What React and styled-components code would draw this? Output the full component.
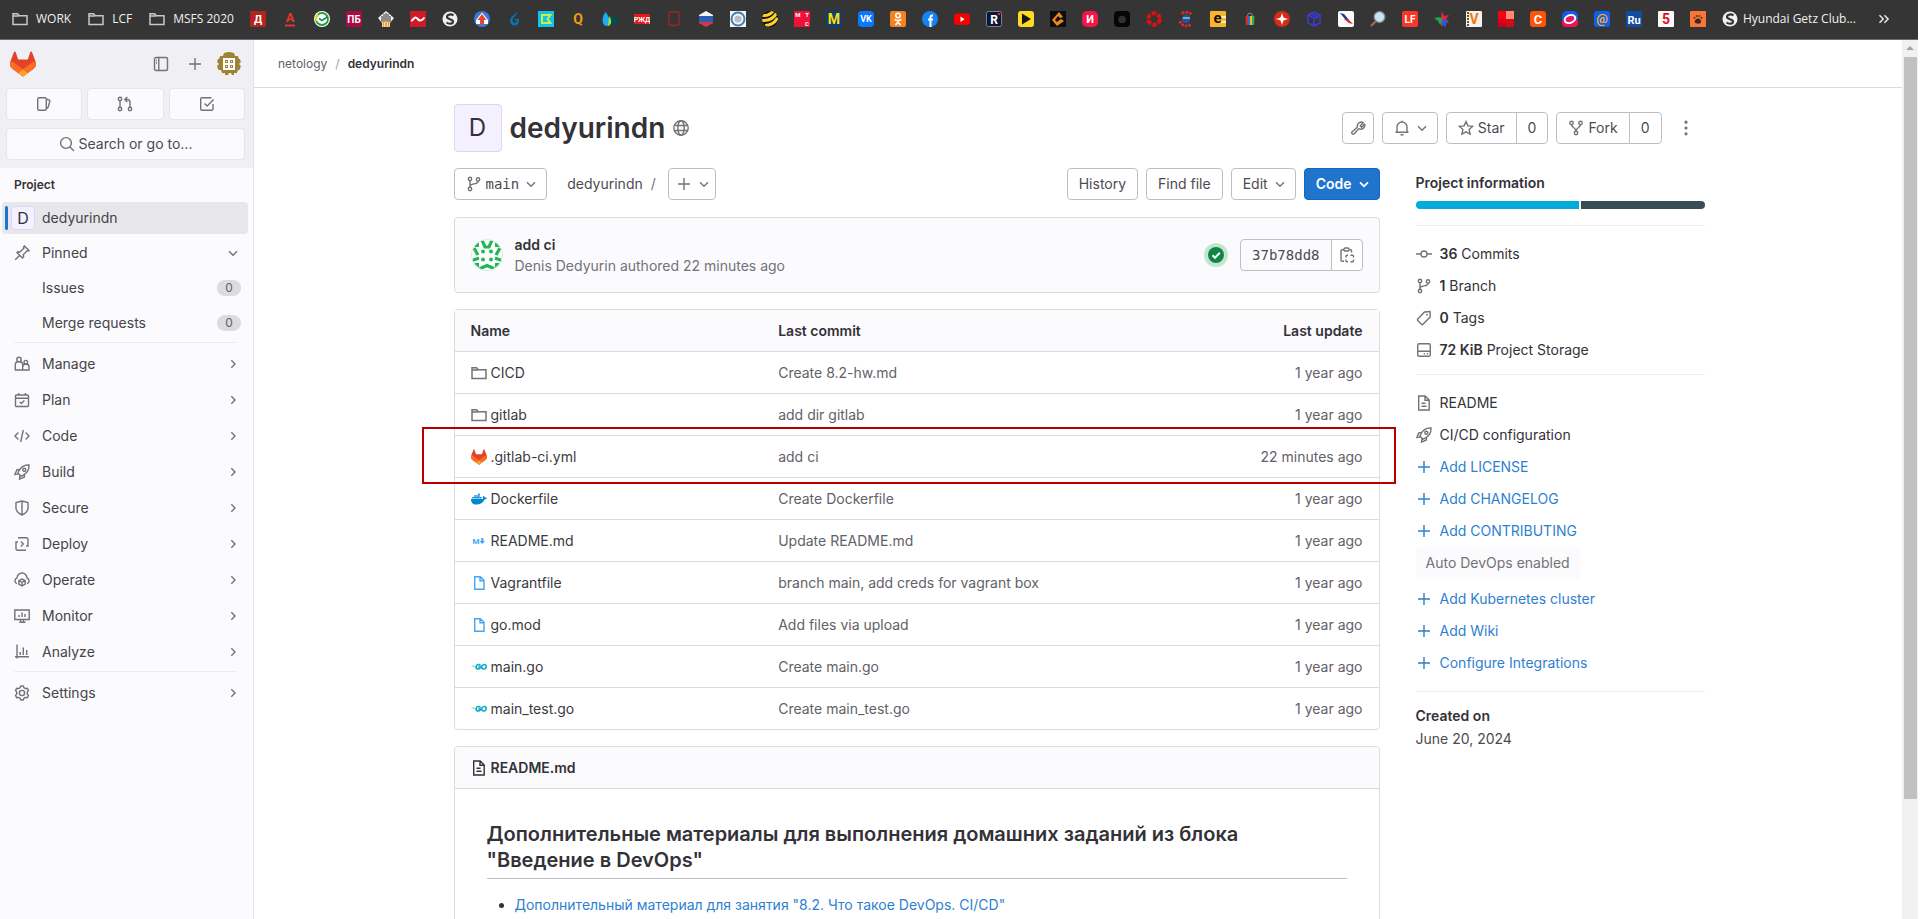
import React from "react";
import styled, { createGlobalStyle, css } from "styled-components";
import { FaDocker, FaGolang } from "react-icons/fa6";

const sans = `Inter, "Noto Sans", "Liberation Sans", sans-serif`;
const mono = `"DejaVu Sans Mono", "Liberation Mono", monospace`;

const c = {
  text: "#333238",
  soft: "#626168",
  muted: "#737278",
  border: "#dcdcde",
  line: "#ececef",
  control: "#bfbfc3",
  subtle: "#fbfafd",
  link: "#2f7fd0",
};

const GlobalStyle = createGlobalStyle`
  *, *::before, *::after { box-sizing: border-box; }
  body { margin: 0; font-family: ${sans}; font-size: 14px; line-height: 20px; color: ${c.text}; background: #fff; }
  button { font: inherit; color: inherit; cursor: pointer; margin: 0; }
  a { color: inherit; text-decoration: none; }
  ul, h1, h2, h3, p { margin: 0; padding: 0; }
  ul { list-style: none; }
  svg { display: block; flex: none; }
`;

/* ---------- icons ---------- */

const glyphs = {
  folder: <path d="M1 12.8V2.8h4.6l1.6 2H15v8.8H1zM1 5h6" />,
  panel: <><rect x="1.5" y="1.5" width="13" height="13" rx="1.5" /><path d="M5.8 1.5v13M3 4.5h1M3 7h1" /></>,
  plus: <path d="M8 2v12M2 8h12" />,
  issues: <><rect x="1.7" y="1.7" width="8.6" height="12.6" rx="1.5" /><path d="M10.5 3.2l2.6.7a1 1 0 0 1 .7 1.2l-1.6 6-1.7 1.7" /></>,
  merge: <><circle cx="3" cy="3" r="1.7" /><circle cx="3" cy="13" r="1.7" /><circle cx="13" cy="13" r="1.7" /><path d="M3 4.7v6.6M13 11.3V6.5a3 3 0 0 0-3-3H8M10.3 1 7.8 3.5 10.3 6" /></>,
  todo: <><path d="M14 8v5a1.3 1.3 0 0 1-1.3 1.3H3A1.3 1.3 0 0 1 1.7 13V3A1.3 1.3 0 0 1 3 1.7h9.5" /><path d="m5.5 7.5 2.6 2.6 6.5-6.6" /></>,
  search: <><circle cx="7" cy="7" r="5.4" /><path d="m11 11 4 4" /></>,
  pin: <path d="M1.2 14.8 5.6 10.4M3 7.6l5.4 5.4 1.2-1.2-.2-2.2 4-4L14.6 6 15 5.600 10.400 1l-.8.8.4 1.200-4 4L3.900 6.700z" />,
  down: <path d="m4 6.300 4 4 4-4" />,
  right: <path d="m6.300 4.300 3.700 3.700-3.700 3.700" />,
  more: <path d="m2 3 5 5-5 5M8.500 3l5 5-5 5" />,
  manage: <><circle cx="5" cy="3.400" r="2.200" /><circle cx="11.800" cy="6.200" r="1.800" /><path d="M1.300 14V8.700a3 3 0 0 1 3-3h1.400a3 3 0 0 1 3 3V14zM8.700 14H15v-3.200a2.500 2.500 0 0 0-2.500-2.500h-1.200a2.500 2.500 0 0 0-2.500 2" /></>,
  plan: <><rect x="1.500" y="3" width="13" height="11.500" rx="1" /><path d="M1.500 6.200h13M4.600 1v2M11.400 1v2M5.800 10l1.600 1.600 3-3" /></>,
  code: <path d="M4.400 4.500.900 8l3.500 3.500M11.600 4.500 15.100 8l-3.500 3.500M9.300 2 6.700 14" />,
  rocket: <><path d="M15 1c-5-.3-8 1.500-10.300 6.200l-.8 1.900 3 3 1.900-.8C13.500 9 15.300 6 15 1zM5.300 5.600H3L.9 10.500l3-.4M10.400 10.700V13l-4.900 2.100.4-3" /><circle cx="10.300" cy="5.700" r="1.500" /></>,
  shield: <path d="M8 1 2 2.500v5.800c0 3 2.600 5 6 6.700 3.400-1.700 6-3.700 6-6.700V2.500zM8 1v14" />,
  deploy: <path d="M4 1.800h8.500A1.500 1.500 0 0 1 14 3.300V10h-2M12 14.200H3.500A1.500 1.500 0 0 1 2 12.700V6h2M6.800 5.500 9.300 8l-2.500 2.500" />,
  operate: <><path d="M3 11.700A3 3 0 0 1 3 6a5 5 0 0 1 10 0 3 3 0 0 1 0 5.700" /><path d="m8 7 3.200 1.600v3.500L8 14l-3.200-1.900V8.600zM4.800 8.600 8 10.300l3.200-1.700M8 10.300V14" /></>,
  monitor: <path d="M.800 2h14.400v9.500H.800zM5.500 14.300h6M6.500 11.500v2.500M9.500 11.500v2.500M5 7v2M8 4.500V9M11 6v3" />,
  analyze: <path d="M3 .500v14M1 12.800h14M6.200 8v3M9.300 3.500V11M12.700 6v5" />,
  gear: <><path d="m6.700 1h2.600l.6 1.700 1.500.9 1.800-.4 1.300 2.300L13.300 6.900v2.200l1.200 1.400-1.300 2.300-1.800-.4-1.500.9L9.300 15H6.700l-.6-1.700-1.500-.9-1.800.4-1.300-2.300 1.200-1.400V6.900L1.500 5.500l1.300-2.300 1.800.4 1.500-.9z" strokeLinejoin="round" /><circle cx="8" cy="8" r="2.600" /></>,
  globe: <><circle cx="8" cy="8" r="7.200" /><ellipse cx="8" cy="8" rx="3.200" ry="7.200" /><path d="M1.500 5.500h13M1.500 10.500h13" /></>,
  wrench: <path d="M10.200 5.800 13.300 2.700A4 4 0 0 0 7.400 7.200L2.200 11.700a1.500 1.500 0 0 0 0 2.100 1.500 1.500 0 0 0 2.100 0L8.800 8.600a4 4 0 0 0 5.900-4.500L11.600 7.200z" strokeLinejoin="round" />,
  bell: <path d="M1.500 12.300h13M3 12V7a5 5 0 0 1 10 0v5M6.500 14.800h3M8 2V.8" />,
  star: <path d="m8 1.600 1.900 4.300 4.700.5-3.500 3.200 1 4.600L8 11.800l-4.100 2.400 1-4.600L1.400 6.400l4.700-.5z" />,
  fork: <><circle cx="3.500" cy="3" r="1.700" /><circle cx="12.500" cy="3" r="1.700" /><circle cx="8" cy="13" r="1.700" /><path d="M3.500 4.700C3.500 8 8 7 8 11.300c0-4.300 4.500-3.300 4.500-6.600" /></>,
  branch: <><circle cx="4" cy="3" r="1.700" /><circle cx="4" cy="13" r="1.700" /><circle cx="12" cy="3.500" r="1.700" /><path d="M4 4.700v6.600M12 5.200c0 4-8 1.500-8 5" /></>,
  dots: <path d="M8 2.200v.01M8 8v.01M8 13.800v.01" strokeWidth="3.200" strokeLinecap="round" />,
  paste: <><path d="M5 2.700H3.300A1.300 1.300 0 0 0 2 4v9a1.300 1.300 0 0 0 1.300 1.300H5M10.500 2.700H11.300A1.300 1.300 0 0 1 12.600 4v1.500" /><rect x="5" y="1" width="5" height="3" rx="1" /><path d="M7 10.500V9.200a1 1 0 0 1 1-1h1M11.500 8.200h2a1 1 0 0 1 1 1v1.300M14.500 12.500v1.300a1 1 0 0 1-1 1h-2M9 14.800H8a1 1 0 0 1-1-1v-1.300" /></>,
  commit: <><circle cx="8" cy="8" r="3" /><path d="M0 8h5M11 8h5" /></>,
  tag: <><path d="M8.500 2 14 1.500 14.200 7 7 14.300a1 1 0 0 1-1.400 0L1.700 10.400a1 1 0 0 1 0-1.400z" /><path d="M11 4.700v.1" strokeLinecap="round" strokeWidth="1.800" /></>,
  disk: <><rect x="1.700" y="1.700" width="12.600" height="12.600" rx="1.500" /><path d="M1.700 9.300h12.600M7.700 11.800h1.200M10.800 11.800H12" /></>,
  doc: <path d="M2.700 1h6.500l4 4v10H2.700zM9 1v4.200h4M5.500 8.300h4M5.500 11.300h5" />,
  file: <path d="M3.700 1.700h5.600l3.700 3.700v8.900H3.700zM9 1.700v4h4" />,
  check: <path d="m4.500 8.300 2.500 2.500 4.800-5" strokeWidth="2" />,
};

const Glyph = styled.svg`
  width: ${(p) => p.$size}px;
  height: ${(p) => p.$size}px;
  color: ${(p) => p.$color};
  fill: none;
  stroke: currentColor;
  stroke-width: ${(p) => p.$weight};
`;

function Icon({ name, size = 16, color = c.muted, weight = 1.4 }) {
  return (
    <Glyph viewBox="0 0 16 16" $size={size} $color={color} $weight={weight} aria-hidden="true">
      {glyphs[name]}
    </Glyph>
  );
}

function Tanuki({ size }) {
  return (
    <svg width={size} height={size} viewBox="0 0 25 24" aria-hidden="true">
      <path fill="#E24329" d="m24.507 9.500-.034-.09L21.082.562a.896.896 0 0 0-1.694.091l-2.290 7.010H7.825L5.535.653a.898.898 0 0 0-1.694-.09L.451 9.411.416 9.500a6.297 6.297 0 0 0 2.090 7.278l.012.010.030.022 5.160 3.867 2.560 1.935 1.554 1.176a1.051 1.051 0 0 0 1.268 0l1.555-1.176 2.560-1.935 5.197-3.890.014-.010A6.297 6.297 0 0 0 24.507 9.500Z" />
      <path fill="#FC6D26" d="m24.507 9.500-.034-.09a11.440 11.440 0 0 0-4.560 2.051l-7.447 5.632 4.742 3.584 5.197-3.890.014-.010A6.297 6.297 0 0 0 24.507 9.500Z" />
      <path fill="#FCA326" d="m7.707 20.677 2.560 1.935 1.555 1.176a1.051 1.051 0 0 0 1.268 0l1.555-1.176 2.560-1.935-4.743-3.584-4.755 3.584Z" />
      <path fill="#FC6D26" d="M5.010 11.461a11.430 11.430 0 0 0-4.560-2.050L.416 9.500a6.297 6.297 0 0 0 2.090 7.278l.012.010.030.022 5.160 3.867 4.745-3.584-7.444-5.632Z" />
    </svg>
  );
}

function UserAvatar() {
  return (
    <svg width="24" height="24" viewBox="0 0 24 24" role="img" aria-label="User">
      <clipPath id="user-clip"><circle cx="12" cy="12" r="12" /></clipPath>
      <g clipPath="url(#user-clip)">
        <rect width="24" height="24" fill="#f4f1e6" />
        <path fill="#9c8434" d="M7 0h10l1 4h3l1 3h2v3l-2 2 2 2v4h-3l-1 3h-3v2h-2l-1-2h-2l-1 2H8v-2H5l-1-3H0v-4l2-2-2-2V7h2l1-3h3z" />
        <path fill="#fff" d="M6 6h12v12H6z" />
        <path fill="#9c8434" d="M8 8h3v3H8zM13 8h3v3h-3zM8 13h3v3H8zM13 13h3v3h-3z" />
        <path fill="#fff" d="M9 9h1v1H9zM14 9h1v1h-1zM9 14h1v1H9zM14 14h1v1h-1z" />
      </g>
    </svg>
  );
}

function AuthorAvatar() {
  return (
    <svg width="32" height="32" viewBox="0 0 32 32" role="img" aria-label="Denis Dedyurin">
      <clipPath id="author-clip"><circle cx="16" cy="16" r="15.500" /></clipPath>
      <g clipPath="url(#author-clip)" stroke="#1fb856" strokeWidth="3.200" fill="none">
        <rect width="32" height="32" fill="#fff" stroke="none" />
        <path d="M10.500 0l3.500 8h4l3.500-8M3 9l4 7M29 9l-4 7M0 22l8-3M32 22l-8-3M8 30l8-3.500 8 3.500" />
        <g fill="#1fb856" stroke="none">
          <path d="M0 8V0h8v8zM24 0h8v8h-8zM2 24h6v4l-3 3H2zM24 24h6v8h-3l-3-4z" />
          <circle cx="12" cy="12.500" r="1.900" /><circle cx="20" cy="12.500" r="1.900" />
          <circle cx="12" cy="20.500" r="1.900" /><circle cx="20" cy="20.500" r="1.900" />
        </g>
      </g>
      <circle cx="16" cy="16" r="15.500" fill="none" stroke="#e4e4e8" />
    </svg>
  );
}

/* ---------- bookmark bar ---------- */

const BookmarkBar = styled.nav`
  display: flex;
  align-items: center;
  gap: 16px;
  height: 40px;
  flex: none;
  margin-right: 4px;
  padding: 0 28px 2px 12px;
  background: #353535;
  border-bottom: 1px solid #6b6b6b;
  color: #f1f1f1;
  font: 12px/16px "Open Sans", "Noto Sans", sans-serif;
  white-space: nowrap;
  overflow: hidden;
`;
const Folders = styled.div`
  display: flex;
  gap: 17px;
`;
const Bookmark = styled.a`
  display: flex;
  align-items: center;
  gap: ${(p) => (p.$tight ? 5 : 8)}px;
  flex: none;
`;
const Overflow = styled.button`
  display: flex;
  margin-left: auto;
  padding: 0;
  border: 0;
  background: none;
`;
const FavText = styled.text`
  font: 700 ${(p) => p.$s}px Roboto, sans-serif;
  text-anchor: middle;
  fill: ${(p) => p.$c};
`;

const Letter = ({ bg, fg = "#fff", size = 11, y = 12, r = 1, children }) => (
  <>
    {bg && <rect width="16" height="16" rx={r} fill={bg} />}
    <FavText x="8" y={y} $s={size} $c={fg}>{children}</FavText>
  </>
);

const swirl = (
  <>
    <circle cx="8" cy="8" r="7.500" fill="#f1f1f1" />
    <path d="M11.500 4.500C9 2.500 5 3.500 5 6s6 2 6 4.500-4 3-6.500 1" stroke="#353535" strokeWidth="2.200" fill="none" />
  </>
);

const favicons = [
  ["Д", <Letter bg="#b3231a">Д</Letter>],
  ["А", <><Letter fg="#e8352c" size={13} y={11}>А</Letter><path d="M3 14.500h10" stroke="#e8352c" strokeWidth="2" /></>],
  ["Sber", <><circle cx="8" cy="8" r="8" fill="#fff" /><circle cx="8" cy="8" r="6" fill="none" stroke="#21a038" strokeWidth="1.800" /><path d="M2.500 10A6 6 0 0 1 4 3.500" stroke="#f2d718" strokeWidth="1.800" fill="none" /><path d="m5 7.500 3 2 6-4" stroke="#1b8f55" strokeWidth="1.700" fill="none" /></>],
  ["ПБ", <Letter bg="#a90a48" size={10}>ПБ</Letter>],
  ["House", <><path d="M8 0 0 7l4 5v4h8v-4l4-5z" fill="#f4f4f4" /><path d="M4 5v6M6 3v8M8 2v8M10 3v8M12 5v6" stroke="#222" /><path d="M5.500 10v6M8 10v6M10.500 10v6" stroke="#f29a1c" strokeWidth="1.600" /></>],
  ["Wave", <><rect width="16" height="16" fill="#cf1b28" /><path d="M1 9.500c2 .500 2.500-3 4.500-3s2.500 3 4.500 3 3-1 4.500-3" stroke="#fff" strokeWidth="2" fill="none" /></>],
  ["Globe", swirl],
  ["Up", <><circle cx="8" cy="8" r="8" fill="#3b78d8" /><path d="M8 1.500 14 9v4H2V9z" fill="#fff" /><path d="m8 3 4.500 6H10v4H6V9H3.500z" fill="#e8432e" /></>],
  ["Gas", <path d="M10.500 0c1 4-6.500 4-6.500 10a4.500 4.500 0 0 0 9 0V8H8.500v1.500H11c0 3-4.500 3-4.500-.5C6.500 5.500 13 4 10.500 0z" fill="#0a72b8" />],
  ["K", <><rect width="16" height="16" fill="#12c2ee" /><path d="M4 4h8.500L9.500 8l3 4H4z" fill="none" stroke="#c9f13c" strokeWidth="2" /></>],
  ["Q", <Letter fg="#f49a12" size={14} y={13}>Q</Letter>],
  ["Drops", <><circle cx="11" cy="9.500" r="5" fill="#0b4a4c" /><path d="M3.500 1C-1 7 0 15 4.500 15 9 15 8 6 3.500 1z" fill="#18aef0" /><path d="M7 5c3 4 3 9-1 10z" fill="#9be04a" /></>],
  ["РЖД", <><rect y="3" width="16" height="10" fill="#e21a1a" /><FavText x="8" y="11" $s={7} $c="#fff">РЖД</FavText></>],
  ["Frame", <path d="M3 1h10v13H9l-2 1.500V14H3z" fill="none" stroke="#c81e1e" />],
  ["Flag", <><clipPath id="flag-clip"><path d="M8 0l7 4v8l-7 4-7-4V4z" /></clipPath><g clipPath="url(#flag-clip)"><path fill="#f4f4f4" d="M0 0h16v6H0z" /><path fill="#2a5fb4" d="M0 5h16v6H0z" /><path fill="#d8344a" d="M0 11h16v5H0z" /></g></>],
  ["Seal", <><rect width="16" height="16" fill="#f6f6f6" /><circle cx="8" cy="8" r="6.500" fill="none" stroke="#3e7fb5" strokeWidth="2" /><circle cx="8" cy="8" r="3.600" fill="#b9bcc2" /></>],
  ["Beeline", <><clipPath id="bee-clip"><circle cx="8" cy="8" r="8" /></clipPath><g clipPath="url(#bee-clip)"><rect width="16" height="16" fill="#151515" /><path d="M0 4.500C5 5 9 3 11 0M0 9.500C7 10 12 7 14.500 2M3 14.500c6 0 10-3 12.500-7.500" stroke="#fdd32a" strokeWidth="3" fill="none" /></g></>],
  ["МТС", <><rect width="16" height="16" fill="#f0103a" /><FavText x="4" y="6" $s={6} $c="#fff">M</FavText><FavText x="13" y="6" $s={6} $c="#fff">T</FavText><FavText x="13" y="15" $s={6} $c="#fff">C</FavText></>],
  ["M", <Letter bg="#0c3f78" fg="#ffe000" size={14} y={13}>M</Letter>],
  ["VK", <Letter bg="#0a77ff" r={4} size={9} y={11}>VK</Letter>],
  ["OK", <><rect width="16" height="16" rx="2" fill="#f58220" /><circle cx="8" cy="4.500" r="2.200" fill="none" stroke="#fff" strokeWidth="1.600" /><path d="M4.500 8.500q3.500 2 7 0M5.500 14 8 11l2.500 3" stroke="#fff" strokeWidth="1.700" fill="none" /></>],
  ["Facebook", <><circle cx="8" cy="8" r="8" fill="#1583f2" /><path d="M11 4.500H9.700Q8.500 4.500 8.500 6v10M6 8.500h5" stroke="#fff" strokeWidth="2" fill="none" /></>],
  ["YouTube", <><rect y="2.500" width="16" height="11.500" rx="3" fill="#f80000" /><path d="m6.500 5.500 4 2.700-4 2.700z" fill="#fff" /></>],
  ["R", <><rect x=".5" y=".5" width="15" height="15" rx="2" fill="#0c1630" stroke="#77809a" /><FavText x="8" y="12.500" $s={12} $c="#fff">R</FavText><circle cx="13" cy="3" r="1.300" fill="#ee1c2e" /></>],
  ["Play", <><rect width="16" height="16" rx="3" fill="#fedb22" /><path d="m4 2.500 9 5.500-9 5.500z" fill="#151515" /></>],
  ["C", <><rect width="16" height="16" fill="#0d0d0d" /><path d="m13 6-4-5-7 8 5 6 7-5-3-2-4 3-2-2 3-4 2 2z" fill="#f3851e" /></>],
  ["И", <Letter bg="#f5154b" r={5} size={11}>И</Letter>],
  ["Lens", <><rect width="16" height="16" rx="4" fill="#060606" /><circle cx="8" cy="8.500" r="3.800" fill="#303030" /></>],
  ["Ring", <circle cx="8" cy="8" r="5.800" fill="none" stroke="#e01010" strokeWidth="4" strokeDasharray="4.500 1.570" />],
  ["Ship", <><path d="M13 3.500A6.500 6.500 0 0 0 3 3.500M2 10a6.500 6.500 0 0 0 11 3" fill="none" stroke="#e02626" strokeWidth="3" strokeDasharray="2.500 1" /><circle cx="8" cy="8" r="4.200" fill="#1d57a8" /><path d="M5 7h7" stroke="#e9e9e9" /></>],
  ["e", <><rect width="16" height="16" rx="1" fill="#fbb52c" /><path d="M11 6h5M11 11h5" stroke="#fff" strokeWidth="1.500" /><FavText x="7.500" y="12" $s={15} $c="#111">e</FavText></>],
  ["Bag", <><path d="M5.500 5a2.500 3 0 0 1 5 0" stroke="#888" fill="none" /><path d="M3.500 5H6v9H4z" fill="#d93025" /><path d="M6 5h2v9H6z" fill="#1a73e8" /><path d="M8 5h2v9H8z" fill="#fbbc04" /><path d="M10 5h2.500l-.500 9h-2z" fill="#34a853" /></>],
  ["Star", <><circle cx="8" cy="8" r="8" fill="#d92a16" /><path d="m8 2 1.500 4.500L14 8 9.500 9.500 8 14 6.500 9.500 2 8l4.500-1.500z" fill="#fff" /></>],
  ["Cube", <path d="m8 1 6 3v8l-6 3-6-3V4zM2 4l6 3 6-3M8 7v8M5 2.500l6 3v3" stroke="#3b3bd6" strokeWidth="1.500" fill="none" />],
  ["Arrow", <><rect width="16" height="16" rx="2" fill="#fafafa" /><path d="m2 2 4 1 5 6-4-1z" fill="#123e8c" /><path d="m6 8 4 0 5 5-4-1z" fill="#d8232e" /></>],
  ["Search", <><circle cx="9.500" cy="6" r="5.300" fill="#c8e4f4" stroke="#8b949c" strokeWidth="1.300" /><path d="m6 10-5 5" stroke="#9a6f5c" strokeWidth="2" /></>],
  ["LF", <Letter bg="#fb3527" r={2} size={10}>LF</Letter>],
  ["Colour star", <><path d="m8 0 2 5 5-1-3 4 3 4-5-1-2 5-2-4z" fill="#e02740" /><path d="M0 7l6-1 3 3-3 5-2-4z" fill="#1aa654" /><path d="m8 9 7 0-3 3 0 4-4-2z" fill="#2d56dd" /></>],
  ["V", <><Letter bg="#f7f2ea" fg="#ee7a10" size={14} y={13}>V</Letter><path d="M2 1v14" stroke="#222" strokeWidth="1.500" strokeDasharray="2 1" /></>],
  ["Squares", <><rect width="16" height="16" fill="#fa0010" /><path fill="#ff8a78" d="M8 0h8v8H8z" /><path fill="#d10018" d="M0 8h8v8H0z" /><path fill="#353535" d="M8 8h8v8H8z" opacity=".2" /></>],
  ["C", <Letter bg="#ff5305" r={3} size={13} y={12.500}>C</Letter>],
  ["Ellipse", <><rect width="16" height="16" rx="5" fill="#0e5cf0" /><path d="M0 9h16v3a4 4 0 0 1-4 4H4a4 4 0 0 1-4-4z" fill="#ee1258" /><ellipse cx="8" cy="8" rx="5.500" ry="3.800" fill="#e41a5e" stroke="#fff" strokeWidth="2" transform="rotate(-20 8 8)" /></>],
  ["Mail", <Letter bg="#0a5ff0" fg="#ffae1a" r={3} size={13} y={12}>@</Letter>],
  ["Ru", <Letter bg="#134c9c" size={11} y={12.500}>Ru</Letter>],
  ["5", <Letter bg="#fafafa" fg="#e1121c" size={14} y={13}>5</Letter>],
  ["Paw", <><rect width="16" height="16" rx="1" fill="#fb7439" /><path d="M8 7.500c2 0 3.500 2.500 3 4s-5 1.500-6 0 1-4 3-4z" fill="#3a2a26" /><path d="M4.500 6v1.500M6.700 4.200v1.500M9.300 4.200v1.500M11.500 6v1.500" stroke="#3a2a26" strokeWidth="1.700" /></>],
];

const Fav = ({ children }) => <svg width="16" height="16" viewBox="0 0 16 16" aria-hidden="true">{children}</svg>;

function Bookmarks() {
  return (
    <BookmarkBar aria-label="Bookmarks">
      <Folders>
        {["WORK", "LCF", "MSFS 2020"].map((t) => (
          <Bookmark href="#" key={t}>
            <Icon name="folder" color="#c7c7c7" weight={1.5} />
            {t}
          </Bookmark>
        ))}
      </Folders>
      {favicons.map(([name, art], i) => (
        <Bookmark href="#" key={i} aria-label={name}><Fav>{art}</Fav></Bookmark>
      ))}
      <Bookmark href="#" $tight><Fav>{swirl}</Fav>Hyundai Getz Club...</Bookmark>
      <Overflow aria-label="More bookmarks"><Icon name="more" size={12} color="#e8e8e8" weight={2} /></Overflow>
    </BookmarkBar>
  );
}

/* ---------- sidebar ---------- */

const Sidebar = styled.aside`
  width: 254px;
  flex: none;
  background: ${c.subtle};
  border-right: 1px solid #e4e4e8;
`;
const SideHead = styled.div`
  display: flex;
  flex-direction: column;
  gap: 8px;
  padding: 8px 8px 8px 6px;
  background: #f0f0f4;
`;
const BrandRow = styled.div`
  display: flex;
  align-items: center;
  gap: 14px;
  height: 32px;
  padding: 0 4px;
`;
const LogoLink = styled.a`
  margin-right: auto;
`;
const Tools = styled.div`
  display: flex;
  gap: 18px;
`;
const PlainButton = styled.button`
  display: flex;
  padding: 0;
  border: 0;
  background: none;
`;
const Counters = styled.div`
  display: grid;
  grid-template-columns: repeat(3, 1fr);
  gap: 5px;
`;
const SideButton = styled.button`
  display: flex;
  align-items: center;
  justify-content: center;
  gap: 4px;
  height: 32px;
  border: 1px solid #e6e6ea;
  border-radius: 4px;
  background: ${c.subtle};
  color: #4c4b51;
`;
const SideTitle = styled.h3`
  padding: 0 14px;
  font-size: 12px;
  font-weight: 600;
  line-height: 34px;
`;
const NavList = styled.ul`
  display: flex;
  flex-direction: column;
  gap: ${(p) => p.$gap}px;
  padding: 0 5px 3px 2px;
`;
const Divider = styled.hr`
  height: 1px;
  margin: 0 16px 5px 14px;
  border: 0;
  background: ${c.line};
`;
const NavLink = styled.a`
  display: flex;
  align-items: center;
  gap: 12px;
  height: 32px;
  padding: 0 7px 0 ${(p) => (p.$nested ? 40 : 12)}px;
  border-radius: 4px;
  color: #45444a;
  ${(p) =>
    p.$active &&
    css`
      gap: 7px;
      padding-left: 3px;
      background: #e7e6eb;
    `}
`;
const ActiveBar = styled.span`
  width: 3px;
  height: 24px;
  border-radius: 2px;
  background: #1f75cb;
  margin-right: -4px;
`;
const NavText = styled.span`
  flex: 1;
`;
const Count = styled.span`
  width: 24px;
  border-radius: 8px;
  background: ${c.border};
  color: ${c.soft};
  font-size: 12px;
  line-height: 16px;
  text-align: center;
`;
const Initial = styled.span`
  display: flex;
  align-items: center;
  justify-content: center;
  flex: none;
  width: ${(p) => p.$size}px;
  height: ${(p) => p.$size}px;
  border: 1px solid #dcd6ee;
  border-radius: 4px;
  background: #f4f0ff;
  font-size: ${(p) => p.$font}px;
  color: ${c.text};
`;

const sections = [
  ["manage", "Manage"],
  ["plan", "Plan"],
  ["code", "Code"],
  ["rocket", "Build"],
  ["shield", "Secure"],
  ["deploy", "Deploy"],
  ["operate", "Operate"],
  ["monitor", "Monitor"],
  ["analyze", "Analyze"],
];

const NavItem = ({ icon, label, arrow = "right" }) => (
  <li>
    <NavLink href="#">
      <Icon name={icon} />
      <NavText>{label}</NavText>
      <Icon name={arrow} />
    </NavLink>
  </li>
);

function ProjectSidebar() {
  return (
    <Sidebar>
      <SideHead>
        <BrandRow>
          <LogoLink href="#" aria-label="Homepage"><Tanuki size={26} /></LogoLink>
          <Tools>
            <PlainButton aria-label="Toggle sidebar"><Icon name="panel" /></PlainButton>
            <PlainButton aria-label="Create new"><Icon name="plus" /></PlainButton>
          </Tools>
          <PlainButton aria-label="Profile"><UserAvatar /></PlainButton>
        </BrandRow>
        <Counters>
          <SideButton aria-label="Issues"><Icon name="issues" /></SideButton>
          <SideButton aria-label="Merge requests"><Icon name="merge" /></SideButton>
          <SideButton aria-label="To-do list"><Icon name="todo" /></SideButton>
        </Counters>
        <SideButton><Icon name="search" />Search or go to...</SideButton>
      </SideHead>
      <SideTitle>Project</SideTitle>
      <NavList $gap={3}>
        <li>
          <NavLink href="#" $active>
            <ActiveBar />
            <Initial $size={24} $font={16}>D</Initial>
            <NavText>dedyurindn</NavText>
          </NavLink>
        </li>
        <NavItem icon="pin" label="Pinned" arrow="down" />
        <li><NavLink href="#" $nested><NavText>Issues</NavText><Count>0</Count></NavLink></li>
        <li><NavLink href="#" $nested><NavText>Merge requests</NavText><Count>0</Count></NavLink></li>
      </NavList>
      <Divider />
      <NavList $gap={4}>
        {sections.map(([icon, label]) => <NavItem key={label} icon={icon} label={label} />)}
      </NavList>
      <Divider />
      <NavList $gap={4}><NavItem icon="gear" label="Settings" /></NavList>
    </Sidebar>
  );
}

/* ---------- page ---------- */

const Window = styled.div`
  display: flex;
  flex-direction: column;
  height: 100vh;
  overflow: hidden;
`;
const Body = styled.div`
  display: flex;
  flex: 1;
  min-height: 0;
  padding-right: 4px;
`;
const Page = styled.div`
  flex: 1;
  min-width: 0;
  overflow: hidden;
`;
const Crumbs = styled.nav`
  display: flex;
  align-items: center;
  gap: 8px;
  height: 48px;
  padding: 0 24px;
  border-bottom: 1px solid ${c.border};
  font-size: 12px;
  color: ${c.soft};
`;
const Slash = styled.span`
  color: ${(p) => (p.$dark ? c.muted : "#a4a3a8")};
`;
const Strong = styled.strong`
  font-weight: 600;
  color: ${c.text};
`;
const Content = styled.main`
  max-width: 1257px;
  margin: 0 auto;
  padding: 16px 2px 0 4px;
`;
const TitleRow = styled.header`
  display: flex;
  align-items: center;
  gap: 8px;
  height: 48px;
  padding-right: 3px;
`;
const ProjectTitle = styled.h1`
  font-size: 28px;
  line-height: 36px;
  font-weight: 600;
`;
const Push = styled.span`
  flex: 1;
`;
const Columns = styled.div`
  display: grid;
  grid-template-columns: minmax(0, 1fr) 289px;
  gap: 36px;
  padding-top: 16px;
`;
const Toolbar = styled.div`
  display: flex;
  align-items: center;
  gap: 8px;
  margin-bottom: 17px;
`;
const PathText = styled.span`
  display: flex;
  gap: 8px;
  padding: 0 4px 0 12px;
  color: #4c4b51;
`;
const Button = styled.button`
  display: flex;
  align-items: center;
  justify-content: center;
  gap: 4px;
  height: 32px;
  padding: 0 ${(p) => (p.$icon ? 7 : 11)}px;
  ${(p) => p.$menu && css`padding-right: ${p.$icon ? 3 : 7}px;`}
  border: 1px solid ${(p) => (p.$primary ? "#1068bf" : p.$bare ? "transparent" : c.control)};
  border-radius: 4px;
  background: ${(p) => (p.$primary ? "#1f75cb" : "#fff")};
  color: ${(p) => (p.$primary ? "#fff" : "#4c4b51")};
  font-family: ${(p) => (p.$mono ? mono : sans)};
  font-weight: ${(p) => (p.$primary ? 600 : 400)};
`;
const Joined = styled.div`
  display: flex;
  ${Button}:first-child {
    border-radius: 4px 0 0 4px;
  }
  ${Button}:last-child {
    margin-left: -1px;
    border-radius: 0 4px 4px 0;
  }
`;
const Sha = styled(Button)`
  background: ${c.subtle};
  cursor: text;
`;
const CommitCard = styled.section`
  display: flex;
  align-items: center;
  gap: 12px;
  height: 76px;
  margin-bottom: 16px;
  padding: 0 16px;
  border: 1px solid ${c.border};
  border-radius: 4px;
  background: ${c.subtle};
`;
const CommitText = styled.div`
  flex: 1;
  line-height: 21px;
  color: ${c.muted};
`;
const Status = styled.a`
  display: flex;
  align-items: center;
  justify-content: center;
  width: 24px;
  height: 24px;
  border-radius: 50%;
  background: #c3e6cd;
`;
const StatusDot = styled.span`
  width: 16px;
  height: 16px;
  border-radius: 50%;
  background: #108548;
`;

const Table = styled.table`
  width: 100%;
  table-layout: fixed;
  border: 1px solid ${c.border};
  border-radius: 4px;
  border-spacing: 0;
  border-collapse: separate;
`;
const cell = css`
  padding: 0 16px;
  text-align: ${(p) => (p.$end ? "right" : "left")};
`;
const Th = styled.th`
  ${cell}
  height: 41px;
  width: ${(p) => p.$w};
  background: ${c.subtle};
  font-weight: 600;
`;
const Td = styled.td`
  ${cell}
  height: 42px;
  border-top: 1px solid ${c.border};
  color: ${c.soft};
`;
const FileLink = styled.a`
  display: flex;
  align-items: center;
  gap: 4px;
  color: #3a393f;
`;
const FileRow = styled.tr`
  position: relative;
`;
/* frame drawn over the highlighted row */
const Marker = styled.span`
  position: absolute;
  z-index: 1;
  inset: -8px -17px -7px -33px;
  border: 2px solid #b50000;
  pointer-events: none;
`;

const MdIcon = () => (
  <svg width="16" height="16" viewBox="0 0 16 16" aria-hidden="true">
    <FavText x="5" y="11" $s={8} $c="#42a5f5">M</FavText>
    <path d="M10.300 5v3H8.600l2.700 3 2.700-3h-1.700V5z" fill="#42a5f5" />
  </svg>
);

const fileIcons = {
  folder: <Icon name="folder" weight={1.5} />,
  gitlab: <Tanuki size={16} />,
  docker: <FaDocker size={16} color="#0288d1" />,
  md: <MdIcon />,
  file: <Icon name="file" color="#42a5f5" />,
  go: <FaGolang size={16} color="#00acc1" />,
};

const files = [
  ["folder", "CICD", "Create 8.2-hw.md", "1 year ago"],
  ["folder", "gitlab", "add dir gitlab", "1 year ago"],
  ["gitlab", ".gitlab-ci.yml", "add ci", "22 minutes ago"],
  ["docker", "Dockerfile", "Create Dockerfile", "1 year ago"],
  ["md", "README.md", "Update README.md", "1 year ago"],
  ["file", "Vagrantfile", "branch main, add creds for vagrant box", "1 year ago"],
  ["file", "go.mod", "Add files via upload", "1 year ago"],
  ["go", "main.go", "Create main.go", "1 year ago"],
  ["go", "main_test.go", "Create main_test.go", "1 year ago"],
];

const Readme = styled.article`
  margin-top: 16px;
  border: 1px solid ${c.border};
  border-radius: 4px;
`;
const ReadmeHead = styled.header`
  display: flex;
  align-items: center;
  gap: 4px;
  height: 42px;
  padding: 0 16px;
  border-bottom: 1px solid ${c.border};
  border-radius: 4px 4px 0 0;
  background: ${c.subtle};
`;
const ReadmeBody = styled.div`
  padding: 32px;
`;
const ReadmeTitle = styled.h2`
  padding-bottom: 5px;
  border-bottom: 1px solid ${c.control};
  font-size: 20px;
  line-height: 26px;
  font-weight: 600;
  font-optical-sizing: none;
`;
const ReadmeList = styled.ul`
  padding: 16px 0 0 28px;
  list-style: disc;
`;
const Link = styled.a`
  color: ${c.link};
`;

const Info = styled.aside`
  line-height: 20px;
`;
const InfoTitle = styled.h3`
  font-size: 14px;
  line-height: ${(p) => (p.$small ? 23 : 30)}px;
  font-weight: 600;
  color: ${c.text};
`;
const Bar = styled.div`
  display: flex;
  gap: 2px;
  height: 8px;
  margin: 3px 0 16px;
  border-radius: 4px;
  overflow: hidden;
`;
const BarPart = styled.span`
  flex: ${(p) => p.$share};
  background: ${(p) => p.$color};
`;
const InfoList = styled.ul`
  padding: 12px 0 8px;
  border-top: 1px solid ${c.line};
`;
const InfoRow = styled.a`
  display: flex;
  align-items: center;
  gap: 8px;
  height: 32px;
  color: ${(p) => (p.$link ? c.link : c.text)};
`;
const DevOps = styled.button`
  display: block;
  height: 32px;
  margin-bottom: 4px;
  padding: 0 10px;
  border: 0;
  border-radius: 4px;
  background: ${c.subtle};
  color: ${c.muted};
`;
const Created = styled.div`
  margin-top: 4px;
  padding-top: 12px;
  border-top: 1px solid ${c.line};
  line-height: 23px;
  color: #4c4b51;
`;

const ScrollTrack = styled.div`
  display: flex;
  flex-direction: column;
  align-items: center;
  gap: 6px;
  width: 16px;
  flex: none;
  padding-top: 6px;
  background: #f1f1f1;
`;
const ScrollArrow = styled.span`
  border: 4px solid transparent;
  border-top: 0;
  border-bottom-color: #a3a3a3;
  margin-bottom: 1px;
`;
const ScrollThumb = styled.span`
  width: 13px;
  height: 85%;
  background: #c1c1c1;
`;

const Entry = ({ icon, children, link }) => (
  <li>
    <InfoRow href="#" $link={link}>
      <Icon name={icon} color={link ? c.link : c.muted} />
      <span>{children}</span>
    </InfoRow>
  </li>
);

export default function App() {
  return (
    <Window>
      <GlobalStyle />
      <Bookmarks />
      <Body>
        <ProjectSidebar />
        <Page>
          <Crumbs aria-label="Breadcrumbs">
            <a href="#">netology</a>
            <Slash>/</Slash>
            <a href="#"><Strong>dedyurindn</Strong></a>
          </Crumbs>
          <Content>
            <TitleRow>
              <Initial $size={48} $font={24}>D</Initial>
              <ProjectTitle>dedyurindn</ProjectTitle>
              <Icon name="globe" />
              <Push />
              <Button $icon aria-label="Configure"><Icon name="wrench" /></Button>
              <Button $menu aria-label="Notifications"><Icon name="bell" /><Icon name="down" /></Button>
              <Joined>
                <Button><Icon name="star" />Star</Button>
                <Button>0</Button>
              </Joined>
              <Joined>
                <Button><Icon name="fork" />Fork</Button>
                <Button>0</Button>
              </Joined>
              <Button $icon $bare aria-label="More actions"><Icon name="dots" /></Button>
            </TitleRow>
            <Columns>
              <div>
                <Toolbar>
                  <Button $mono $menu><Icon name="branch" />main<Icon name="down" /></Button>
                  <PathText><a href="#">dedyurindn</a><Slash $dark>/</Slash></PathText>
                  <Button $icon $menu aria-label="Add to tree"><Icon name="plus" /><Icon name="down" /></Button>
                  <Push />
                  <Button>History</Button>
                  <Button>Find file</Button>
                  <Button $menu>Edit<Icon name="down" /></Button>
                  <Button $primary $menu>Code<Icon name="down" color="#fff" weight={1.800} /></Button>
                </Toolbar>
                <CommitCard>
                  <AuthorAvatar />
                  <CommitText>
                    <p><a href="#"><Strong>add ci</Strong></a></p>
                    <p>Denis Dedyurin authored 22 minutes ago</p>
                  </CommitText>
                  <Status href="#" aria-label="Pipeline passed">
                    <StatusDot><Icon name="check" color="#fff" /></StatusDot>
                  </Status>
                  <Joined>
                    <Sha $mono>37b78dd8</Sha>
                    <Button $icon aria-label="Copy commit SHA"><Icon name="paste" /></Button>
                  </Joined>
                </CommitCard>
                <Table>
                  <thead>
                    <tr>
                      <Th $w="33.3%">Name</Th>
                      <Th $w="46.7%">Last commit</Th>
                      <Th $w="20%" $end>Last update</Th>
                    </tr>
                  </thead>
                  <tbody>
                    {files.map(([icon, name, message, when]) => (
                      <FileRow key={name}>
                        <Td>
                          {icon === "gitlab" && <Marker />}
                          <FileLink href="#">{fileIcons[icon]}{name}</FileLink>
                        </Td>
                        <Td><a href="#">{message}</a></Td>
                        <Td $end>{when}</Td>
                      </FileRow>
                    ))}
                  </tbody>
                </Table>
                <Readme>
                  <ReadmeHead>
                    <Icon name="doc" color={c.text} />
                    <a href="#"><Strong>README.md</Strong></a>
                  </ReadmeHead>
                  <ReadmeBody>
                    <ReadmeTitle>Дополнительные материалы для выполнения домашних заданий из блока "Введение в DevOps"</ReadmeTitle>
                    <ReadmeList>
                      <li><Link href="#">Дополнительный материал для занятия "8.2. Что такое DevOps. CI/CD"</Link></li>
                    </ReadmeList>
                  </ReadmeBody>
                </Readme>
              </div>
              <Info>
                <InfoTitle>Project information</InfoTitle>
                <Bar>
                  <BarPart $share={163} $color="#00add8" />
                  <BarPart $share={124} $color="#384d54" />
                </Bar>
                <InfoList>
                  <Entry icon="commit"><Strong>36</Strong> Commits</Entry>
                  <Entry icon="branch"><Strong>1</Strong> Branch</Entry>
                  <Entry icon="tag"><Strong>0</Strong> Tags</Entry>
                  <Entry icon="disk"><Strong>72 KiB</Strong> Project Storage</Entry>
                </InfoList>
                <InfoList>
                  <Entry icon="doc">README</Entry>
                  <Entry icon="rocket">CI/CD configuration</Entry>
                  <Entry icon="plus" link>Add LICENSE</Entry>
                  <Entry icon="plus" link>Add CHANGELOG</Entry>
                  <Entry icon="plus" link>Add CONTRIBUTING</Entry>
                  <li><DevOps>Auto DevOps enabled</DevOps></li>
                  <Entry icon="plus" link>Add Kubernetes cluster</Entry>
                  <Entry icon="plus" link>Add Wiki</Entry>
                  <Entry icon="plus" link>Configure Integrations</Entry>
                </InfoList>
                <Created>
                  <InfoTitle $small>Created on</InfoTitle>
                  <p>June 20, 2024</p>
                </Created>
              </Info>
            </Columns>
          </Content>
        </Page>
        <ScrollTrack aria-hidden="true">
          <ScrollArrow />
          <ScrollThumb />
        </ScrollTrack>
      </Body>
    </Window>
  );
}
